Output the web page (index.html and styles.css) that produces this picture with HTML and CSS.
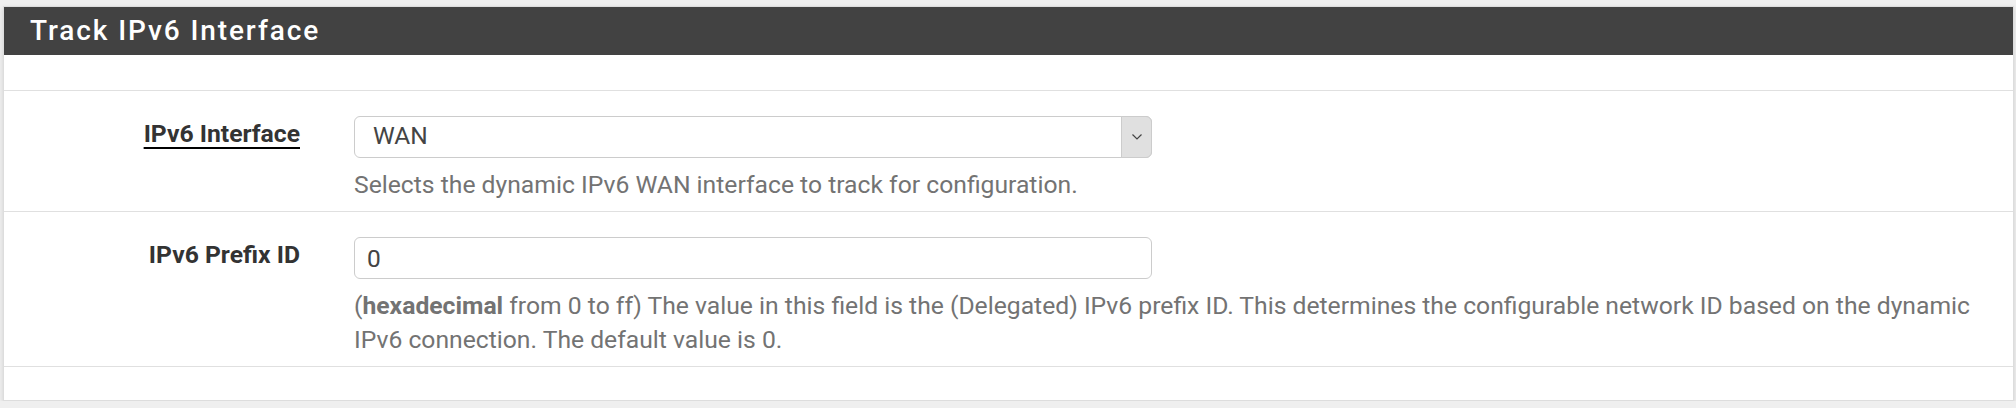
FILE: index.html
```html
<!DOCTYPE html>
<html lang="en">
<head>
  <meta charset="UTF-8" />
  <title>Track IPv6 Interface</title>
  <link rel="stylesheet" href="styles.css">
</head>
<body>
  <div class="panel">
    <div class="panel-heading">
      <h2 class="panel-title">Track IPv6 Interface</h2>
    </div>
    <div class="panel-body">
      <div class="spacer"></div>

      <div class="form-group">
        <label class="control-label" for="track6-interface"><span class="required">IPv6 Interface</span></label>
        <div class="control">
          <div class="select-wrap">
            <select id="track6-interface" class="form-control">
              <option>WAN</option>
            </select>
            <span class="select-arrow" aria-hidden="true">
              <svg width="12" height="8" viewBox="0 0 12 8"><path d="M1.5 1.5 L6 6 L10.5 1.5" fill="none" stroke="#444" stroke-width="1.2"/></svg>
            </span>
          </div>
          <span class="help-block">Selects the dynamic IPv6 WAN interface to track for configuration.</span>
        </div>
      </div>

      <div class="form-group">
        <label class="control-label" for="track6-prefix-id">IPv6 Prefix ID</label>
        <div class="control">
          <input id="track6-prefix-id" class="form-control" type="text" value="0">
          <span class="help-block">(<b>hexadecimal</b> from 0 to ff) The value in this field is the (Delegated) IPv6 prefix ID. This determines the configurable network ID based on the dynamic IPv6 connection. The default value is 0.</span>
        </div>
      </div>

      <div class="spacer last"></div>
    </div>
  </div>
</body>
</html>
```

FILE: styles.css
```css
*, *::before, *::after {
  box-sizing: border-box;
}

body {
  margin: 0;
  background: #efefef;
  font-family: Roboto, "Liberation Sans", sans-serif;
  font-size: 24.7px;
  line-height: 35px;
  color: #333333;
}

/* Panel */
.panel {
  margin: 6px 2px 0 3px;
  background: #ffffff;
  border: 1px solid #dddddd;
  box-shadow: 0 2px 5px rgba(0, 0, 0, 0.12);
}

.panel-heading {
  height: 48px;
  background: #424242;
  padding: 0 26px;
  display: flex;
  align-items: center;
}

.panel-title {
  margin: 0;
  color: #ffffff;
  font-size: 28px;
  font-weight: 500;
  letter-spacing: 1.9px;
  line-height: 1;
}

.spacer {
  height: 35px;
}

.spacer.last {
  height: 34px;
  border-top: 1px solid #e0e0e0;
}

/* Form rows */
.form-group {
  display: flex;
  border-top: 1px solid #e0e0e0;
  padding: 25px 0 9px;
}

.control-label {
  width: 296px;
  flex-shrink: 0;
  text-align: right;
  font-weight: 700;
  color: #333333;
  margin-right: 54px;
}

.required {
  text-decoration: underline;
  text-decoration-color: #000000;
  text-decoration-thickness: 2px;
  text-underline-offset: 5px;
}

.control {
  width: 1633px;
}

.form-control {
  display: block;
  width: 798px;
  height: 42px;
  font-family: inherit;
  font-size: 24.5px;
  color: #444444;
  background: #ffffff;
  border: 1px solid #cccccc;
  border-radius: 6px;
  margin: 0;
  padding: 0 12px;
}

.select-wrap {
  position: relative;
  width: 798px;
}

select.form-control {
  appearance: none;
  -webkit-appearance: none;
  padding: 0 12px 4px 18px;
}

.select-arrow {
  position: absolute;
  top: 0;
  right: 0;
  width: 31px;
  height: 42px;
  background: #e0e0e0;
  border: 1px solid #cccccc;
  border-radius: 0 6px 6px 0;
  display: flex;
  align-items: center;
  justify-content: center;
  pointer-events: none;
}

.help-block {
  display: block;
  margin-top: 10px;
  line-height: 34px;
  color: #737373;
}

.help-block b {
  font-weight: 700;
}
```
